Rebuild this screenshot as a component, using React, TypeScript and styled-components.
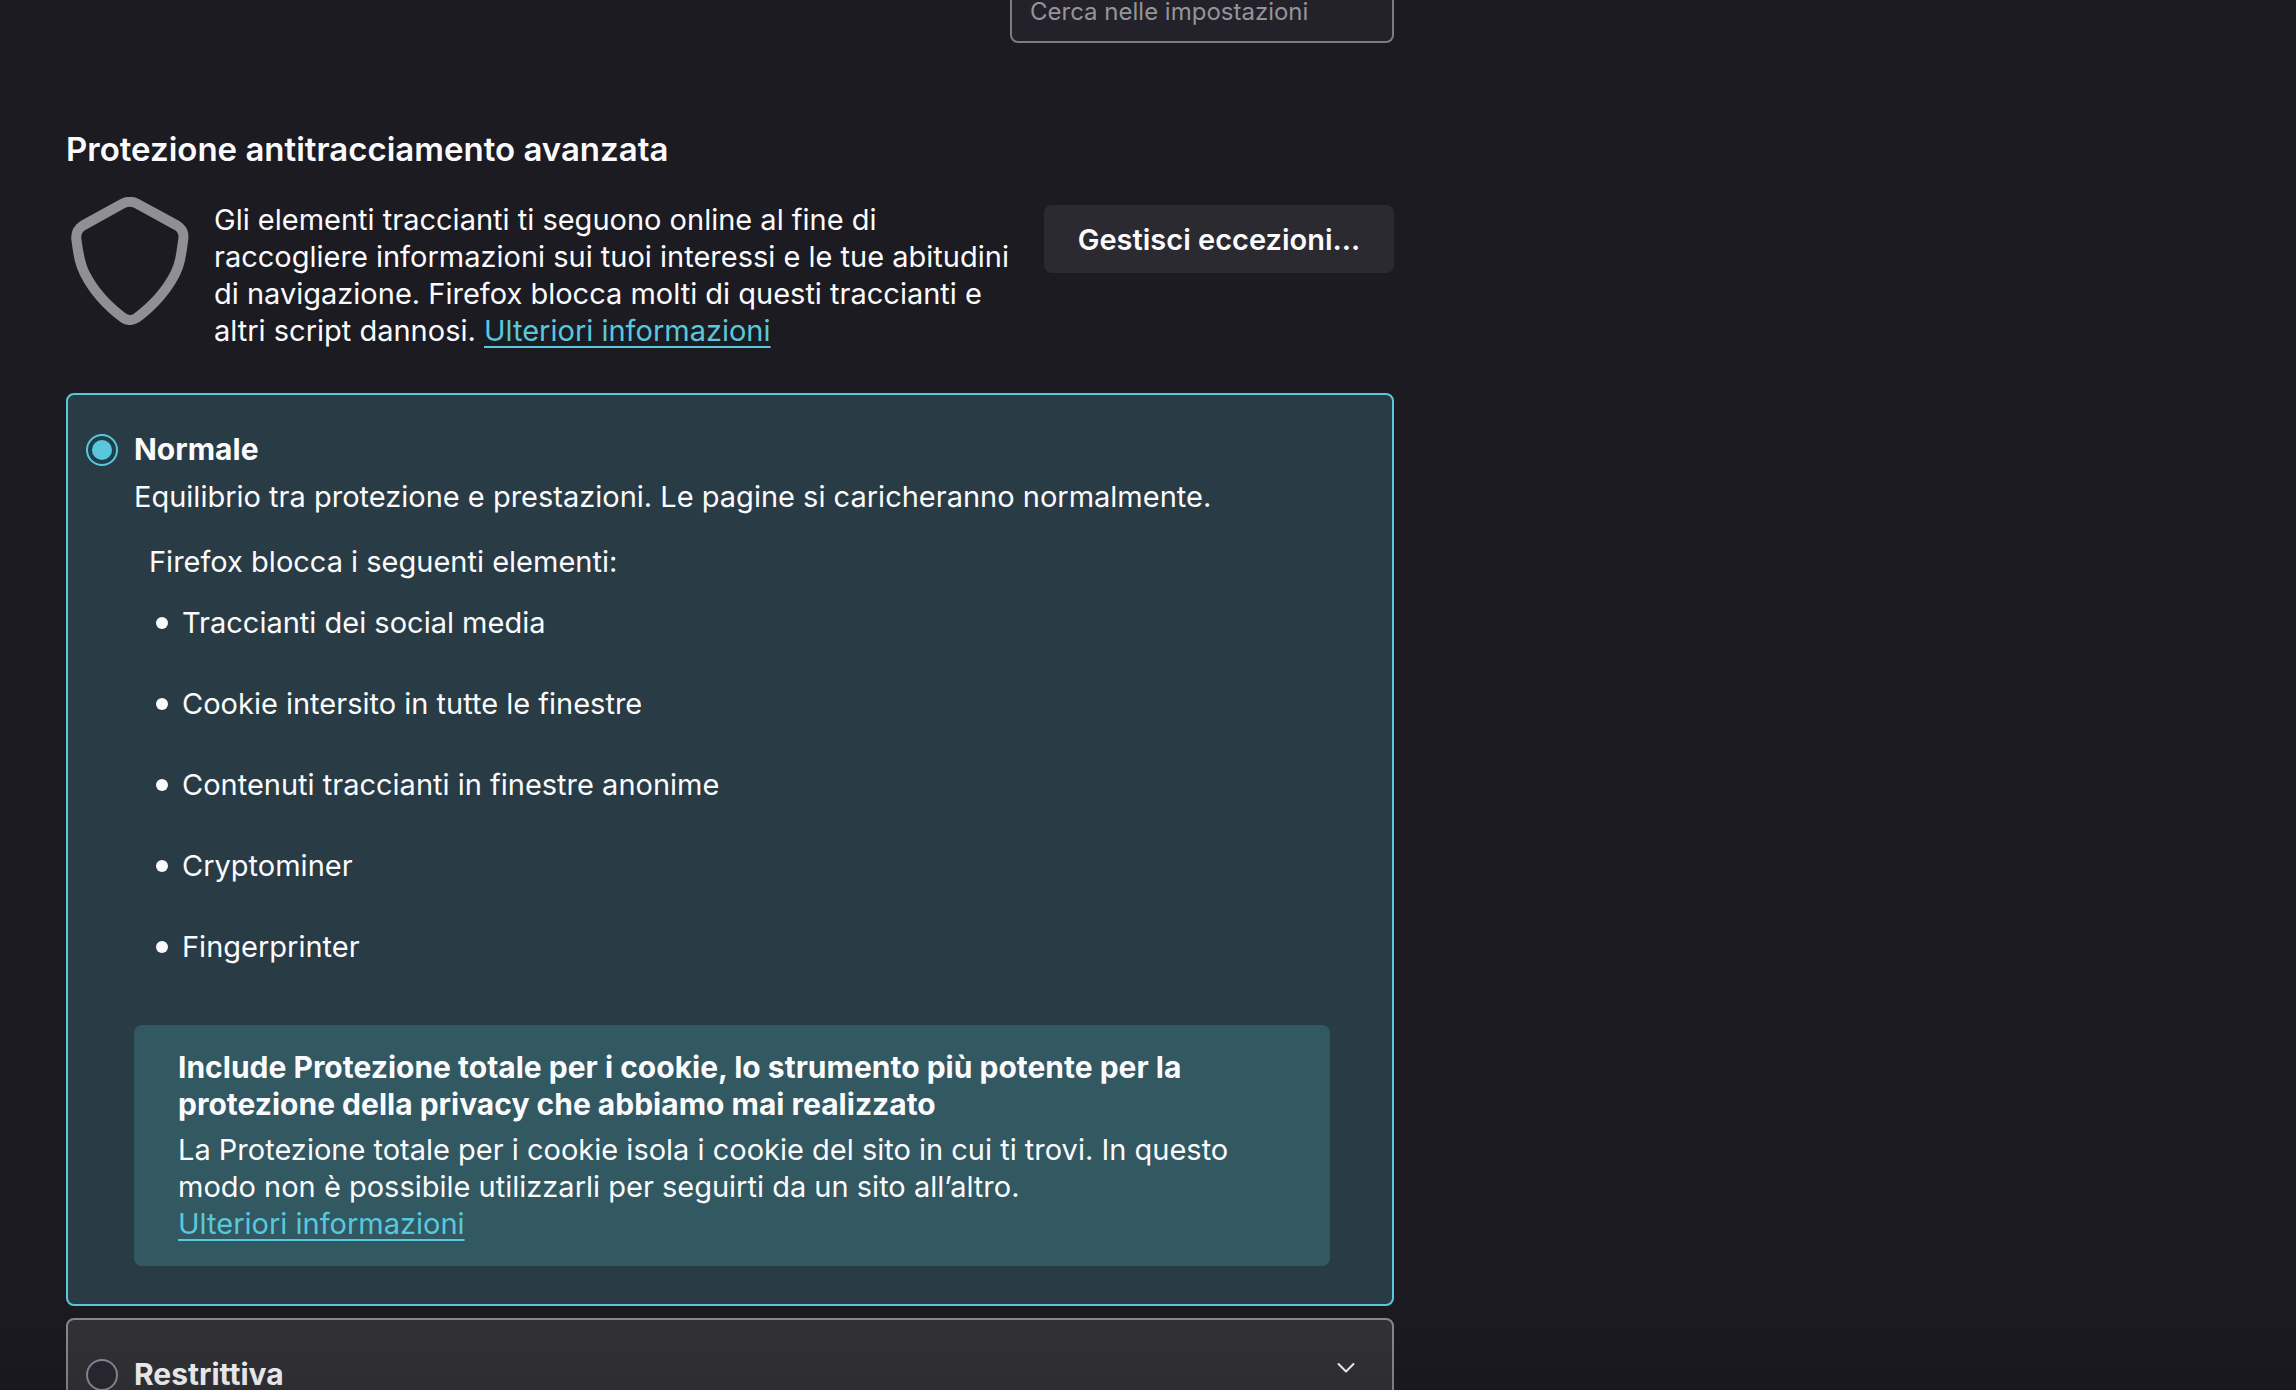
import React, { useState } from "react";
import styled, { createGlobalStyle } from "styled-components";

const color = {
  page: "#1c1b22",
  text: "#fbfbfe",
  muted: "#95949a",
  border: "#7c7b82",
  accent: "#5ac8dc",
  selected: "#293c45",
  info: "#325862",
  button: "#2b2a30",
  card: "#333237",
  field: "#23222b",
};

const GlobalStyle = createGlobalStyle`
  *, *::before, *::after { box-sizing: border-box; }
  body {
    margin: 0;
    background: ${color.page};
    color: ${color.text};
    font-family: Inter, "Liberation Sans", sans-serif;
    font-size: 29px;
    line-height: 37px;
  }
`;

const Page = styled.div`
  height: 100vh;
  overflow: hidden;
  padding: 0 66px;
`;

const Main = styled.main`
  max-width: 1328px;
`;

const SearchBar = styled.div`
  display: flex;
  justify-content: flex-end;
  margin-top: -21px;
  margin-bottom: 86px;
`;

const SearchInput = styled.input`
  width: 384px;
  height: 64px;
  padding: 0 18px;
  border: 2px solid ${color.border};
  border-radius: 8px;
  background: ${color.field};
  color: ${color.text};
  font: inherit;
  font-size: 24px;
  &::placeholder {
    color: ${color.muted};
    opacity: 1;
  }
`;

const Heading = styled.h2`
  margin: 0 0 28px;
  font-size: 33px;
  line-height: 40px;
  font-weight: 600;
`;

const Intro = styled.div`
  display: flex;
  align-items: flex-start;
  margin-bottom: 44px;
`;

const Shield = styled.svg`
  flex: none;
  width: 128px;
  height: 128px;
  margin-right: 20px;
`;

const IntroText = styled.p`
  flex: 1;
  margin: 4px 30px 0 0;
`;

const Link = styled.a`
  color: ${color.accent};
  text-decoration: underline;
  text-decoration-thickness: 2px;
  text-underline-offset: 5px;
  text-decoration-skip-ink: none;
`;

const Button = styled.button`
  flex: none;
  height: 68px;
  width: 350px;
  margin-top: 8px;
  border: 0;
  border-radius: 8px;
  background: ${color.button};
  color: inherit;
  font: inherit;
  font-weight: 600;
`;

const Options = styled.div`
  display: flex;
  flex-direction: column;
  gap: 12px;
`;

const Card = styled.section<{ $selected: boolean }>`
  padding: 36px 62px 38px 18px;
  border: 2px solid ${(p) => (p.$selected ? color.accent : "#8b8a8f")};
  border-radius: 8px;
  background: ${(p) => (p.$selected ? color.selected : color.card)};
`;

const CardHeader = styled.div`
  display: flex;
  align-items: center;
  justify-content: space-between;
`;

const OptionLabel = styled.label`
  display: flex;
  align-items: center;
  gap: 16px;
  font-size: 30px;
  font-weight: 700;
`;

const Radio = styled.input`
  appearance: none;
  display: grid;
  place-content: center;
  width: 32px;
  height: 32px;
  margin: 0;
  border: 2px solid #8f8d9b;
  border-radius: 50%;
  background: #2b2a33;
  &:checked {
    border-color: ${color.accent};
    background: #1d404b;
  }
  &:checked::before {
    content: "";
    width: 20px;
    height: 20px;
    border-radius: 50%;
    background: ${color.accent};
  }
`;

const Expander = styled.button`
  display: flex;
  width: 32px;
  height: 32px;
  margin-right: -32px;
  padding: 0;
  border: 0;
  background: none;
  color: inherit;
`;

const CardBody = styled.div`
  padding-left: 48px;
`;

const Description = styled.p`
  margin: 10px 0 0;
`;

const Blocking = styled.p`
  margin: 28px 0 24px 15px;
`;

const BlockList = styled.ul`
  display: flex;
  flex-direction: column;
  gap: 44px;
  margin: 0 0 60px;
  padding: 0 0 0 22px;
  list-style: none;
`;

const BlockItem = styled.li`
  display: flex;
  align-items: center;
  gap: 14px;
  &::before {
    content: "";
    width: 12px;
    height: 12px;
    border-radius: 50%;
    background: currentColor;
  }
`;

const InfoBox = styled.aside`
  padding: 24px 44px;
  border-radius: 8px;
  background: ${color.info};
`;

const InfoTitle = styled.h3`
  margin: 0 0 8px;
  font: inherit;
  font-size: 30px;
  font-weight: 700;
`;

const InfoText = styled.p`
  margin: 0;
`;

const BottomShade = styled.div`
  position: fixed;
  inset: auto 0 0;
  height: 90px;
  pointer-events: none;
  background: linear-gradient(transparent, rgba(0, 0, 0, 0.1));
`;

const blocked = [
  "Traccianti dei social media",
  "Cookie intersito in tutte le finestre",
  "Contenuti traccianti in finestre anonime",
  "Cryptominer",
  "Fingerprinter",
];

export default function App() {
  const [level, setLevel] = useState("normale");
  return (
    <Page>
      <GlobalStyle />
      <Main>
        <SearchBar>
          <SearchInput
            type="search"
            aria-label="Cerca nelle impostazioni"
            placeholder="Cerca nelle impostazioni"
          />
        </SearchBar>
        <Heading>Protezione antitracciamento avanzata</Heading>
        <Intro>
          <Shield viewBox="0 0 128 128" aria-hidden="true">
            <path
              d="M57.5 6.2Q63.8 3.4 70 6.2L111 28.5Q118.5 33 117.3 42C115 59 114 67 109.5 76C100 95 88 108 70.5 121Q63.8 125 57.5 121C40 108 28 95 18.5 76C14 67 12.5 59 10.3 42Q9.5 33 17 28.5Z"
              fill="none"
              stroke="#8f8f94"
              strokeWidth="10"
              strokeLinejoin="round"
            />
          </Shield>
          <IntroText>
            Gli elementi traccianti ti seguono online al fine di raccogliere
            informazioni sui tuoi interessi e le tue abitudini di navigazione.
            Firefox blocca molti di questi traccianti e altri script dannosi.{" "}
            <Link href="#antitracciamento">Ulteriori informazioni</Link>
          </IntroText>
          <Button type="button">Gestisci eccezioni…</Button>
        </Intro>
        <Options role="radiogroup" aria-label="Protezione antitracciamento avanzata">
          <Card $selected={level === "normale"}>
            <CardHeader>
              <OptionLabel>
                <Radio
                  type="radio"
                  name="livello"
                  checked={level === "normale"}
                  onChange={() => setLevel("normale")}
                />
                Normale
              </OptionLabel>
            </CardHeader>
            <CardBody>
              <Description>
                Equilibrio tra protezione e prestazioni. Le pagine si
                caricheranno normalmente.
              </Description>
              <Blocking>Firefox blocca i seguenti elementi:</Blocking>
              <BlockList>
                {blocked.map((item) => (
                  <BlockItem key={item}>{item}</BlockItem>
                ))}
              </BlockList>
              <InfoBox>
                <InfoTitle>
                  Include Protezione totale per i cookie, lo strumento più
                  potente per la protezione della privacy che abbiamo mai
                  realizzato
                </InfoTitle>
                <InfoText>
                  La Protezione totale per i cookie isola i cookie del sito in
                  cui ti trovi. In questo modo non è possibile utilizzarli per
                  seguirti da un sito all’altro.
                </InfoText>
                <Link href="#cookie">Ulteriori informazioni</Link>
              </InfoBox>
            </CardBody>
          </Card>
          <Card $selected={level === "restrittiva"}>
            <CardHeader>
              <OptionLabel>
                <Radio
                  type="radio"
                  name="livello"
                  checked={level === "restrittiva"}
                  onChange={() => setLevel("restrittiva")}
                />
                Restrittiva
              </OptionLabel>
              <Expander type="button" aria-label="Espandi">
                <svg width="32" height="32" viewBox="0 0 32 32" fill="none">
                  <path
                    d="M8.5 5l7.5 7.5L23.5 5"
                    stroke="currentColor"
                    strokeWidth="2"
                    strokeLinecap="round"
                    strokeLinejoin="round"
                  />
                </svg>
              </Expander>
            </CardHeader>
          </Card>
        </Options>
      </Main>
      <BottomShade />
    </Page>
  );
}
